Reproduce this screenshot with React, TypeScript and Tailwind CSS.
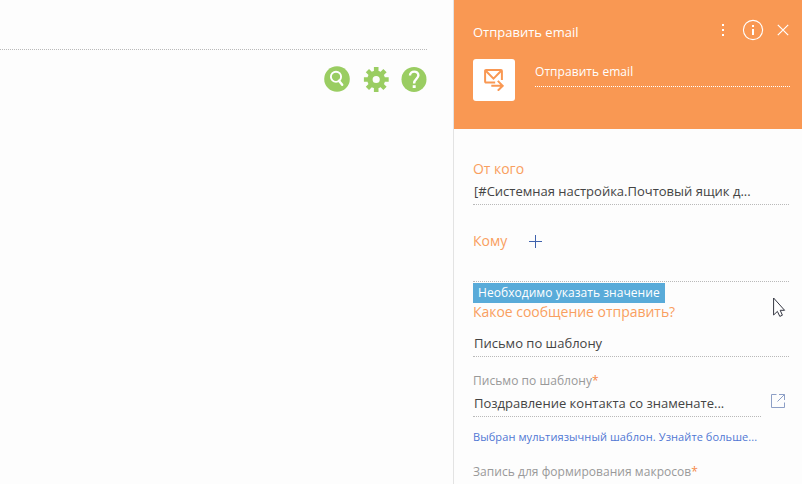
import React from 'react';

type FieldProps = { children?: React.ReactNode; className?: string };

function Underlined({ children, className = '' }: FieldProps) {
  return (
    <div className={`flex items-start border-b border-dotted border-[#b9b9b9] pl-px text-[13px] leading-[18px] text-[#444] whitespace-nowrap ${className}`}>
      {children}
    </div>
  );
}

function SearchIcon() {
  return (
    <svg width="26" height="26" viewBox="0 0 26 26" fill="none">
      <circle cx="13" cy="13" r="12.8" fill="#9acd62" />
      <circle cx="12" cy="10.8" r="5.1" stroke="#fff" strokeWidth="1.9" />
      <path d="M14.9 14.8 18.2 18.8" stroke="#fff" strokeWidth="2.4" strokeLinecap="round" />
    </svg>
  );
}

function GearIcon() {
  return (
    <svg width="26" height="26" viewBox="0 0 26 26" fill="none">
      <g stroke="#9acd62" strokeWidth="4.6">
        <path d="M13.2 1v7M13.2 18v8M.9 13.5H8M18 13.5h7.7" />
        <path d="m4.4 4.7 5 5M17 17.3l5 5M22 4.7l-5 5M9.4 17.3l-5 5" />
      </g>
      <circle cx="13.2" cy="13.5" r="6.3" stroke="#9acd62" strokeWidth="5.4" />
    </svg>
  );
}

function HelpIcon() {
  return (
    <svg width="26" height="26" viewBox="0 0 26 26" fill="none">
      <circle cx="13" cy="13.4" r="12.5" fill="#9acd62" />
      <path d="M9 9.6c0-5.4 8.4-5.2 8.4-.3 0 3.6-4.3 3.6-4.3 8.1" stroke="#fff" strokeWidth="2.4" />
      <path d="M11.7 19.2h3v2.8h-3z" fill="#fff" />
    </svg>
  );
}

function MailIcon() {
  return (
    <svg width="20" height="22" viewBox="0 0 20 22" fill="none" stroke="#f99853" strokeWidth="2">
      <path d="M11.2 13.5H2a.9.9 0 0 1-.9-.9V1.9A.9.9 0 0 1 2 1h15a.9.9 0 0 1 .9.9V11" />
      <path d="m2 2 7.5 7.6L17 2" />
      <path d="M7.3 16.8h11M13.8 11.9l4.9 4.9-4.9 4.9" />
    </svg>
  );
}

export default function App() {
  return (
    <div className="flex h-[484px] w-[802px] overflow-hidden bg-[#fdfdfd] font-['Open_Sans','Noto_Sans',sans-serif]">
      <main className="w-[453px] shrink-0 pr-[26px]">
        <div className="h-[50px] border-b border-dotted border-[#b9b9b9]" />
        <div className="flex justify-end pt-4">
          <div className="mr-[13px]"><SearchIcon /></div>
          <div className="mr-3"><GearIcon /></div>
          <HelpIcon />
        </div>
      </main>

      <aside className="w-[349px] shrink-0 border-l border-[#e3e3e3]">
        <header className="h-[129px] bg-[#f99853] pl-[19px] pr-3 text-white">
          <div className="flex h-[59px] items-start justify-between">
            <h1 className="pt-[23px] text-[13px] leading-[18px]">Отправить email</h1>
            <svg className="mt-[19px]" width="70" height="22" viewBox="0 0 70 22" fill="none" stroke="#fff">
              <path d="M2 5h2v2H2zM2 10h2v2H2zM2 15h2v2H2z" fill="#fff" stroke="none" />
              <circle cx="33" cy="11" r="9.6" strokeWidth="1.1" />
              <path d="M32 6h2v2h-2zM32 10h2v6h-2z" fill="#fff" stroke="none" />
              <path d="m57.8 5.8 10.4 10.4M68.2 5.8 57.8 16.2" strokeWidth="1.2" />
            </svg>
          </div>
          <div className="flex gap-5">
            <div className="flex h-[42px] w-[42px] shrink-0 items-center justify-center rounded-[3px] bg-white">
              <MailIcon />
            </div>
            <div className="h-7 flex-1 border-b border-dotted border-white pt-1 text-[12px] leading-[18px] tracking-[0.06px]">
              Отправить email
            </div>
          </div>
        </header>

        <section className="pl-[19px] pr-[13px] pt-[31px]">
          <div className="h-[22px] text-[14px] leading-[18px] tracking-[-0.03px] text-[#f99f60]">От кого</div>
          <Underlined className="h-[23px]">[#Системная настройка.Почтовый ящик д...</Underlined>

          <div className="flex h-[76px] items-start pt-[27px] text-[14px] leading-[18px] text-[#f99f60]">
            <span className="w-[56px]">Кому</span>
            <svg className="mt-[3px]" width="13" height="13" viewBox="0 0 13 13" stroke="#3f62ad">
              <path d="M6.5 0v13M0 6.5h13" />
            </svg>
          </div>
          <Underlined className="h-px" />
          <div className="mt-px flex h-5 w-[192px] items-center bg-[#59abd9] pl-[5px] text-[12px] tracking-[0.05px] text-white whitespace-nowrap">
            Необходимо указать значение
          </div>
          <div className="h-[31px] text-[14px] leading-[18px] tracking-[-0.03px] text-[#f99f60]">Какое сообщение отправить?</div>
          <Underlined className="h-[23px]">Письмо по шаблону</Underlined>

          <div className="mt-[15px] h-[22px] text-[12px] leading-[18px] tracking-[0.04px] text-[#999]">
            Письмо по шаблону<span className="text-[#f58a4b]">*</span>
          </div>
          <div className="flex items-start gap-[10px]">
            <Underlined className="h-[23px] w-[288px]">Поздравление контакта со знаменате...</Underlined>
            <svg width="14" height="14" viewBox="0 0 14 14" fill="none" stroke="#8d9fc6">
              <path d="M5.5.5h-5v13h13v-5M8 .5h5.5V6M13.5.5l-7 7" />
            </svg>
          </div>
          <div className="mt-[11px] text-[11px] leading-[18px] tracking-[0.09px] text-[#5077d4] whitespace-nowrap">
            Выбран мультиязычный шаблон. Узнайте больше...
          </div>
          <div className="mt-[17px] text-[12px] leading-[18px] tracking-[0.04px] text-[#999] whitespace-nowrap">
            Запись для формирования макросов<span className="text-[#f58a4b]">*</span>
          </div>
        </section>
      </aside>

      <svg className="absolute left-[773px] top-[297px]" width="13" height="21" viewBox="0 0 13 21">
        <path d="M.6 1v17L4.4 14.4l2.4 5 2.6-1.2-2.2-4.9h4.4z" fill="#fff" stroke="#333541" />
      </svg>
    </div>
  );
}
